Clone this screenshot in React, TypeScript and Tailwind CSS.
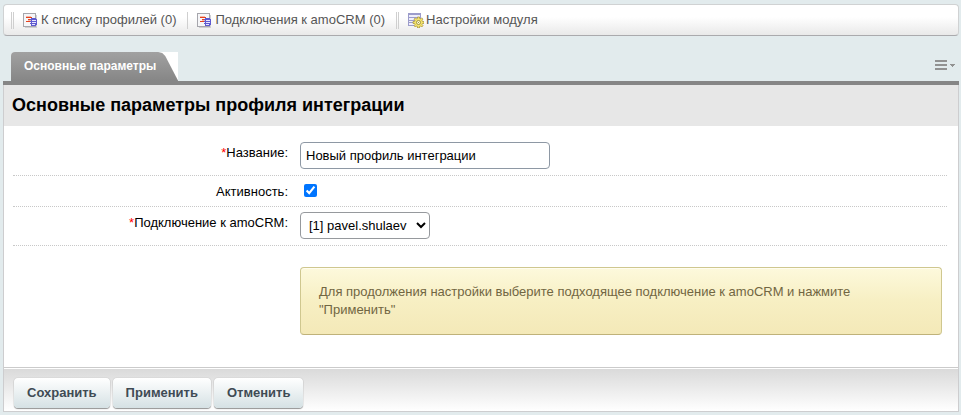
import { useState } from "react";
import type { ReactNode } from "react";

function ListIcon() {
  return (
    <svg width="16" height="16" viewBox="0 0 16 16" shapeRendering="crispEdges" className="shrink-0">
      <path d="M2 15h12v1H2zM13 3h1v13h-1z" fill="#cfcfd3" />
      <path d="M0 1h13v14H0z" fill="#a6a6ac" />
      <path d="M1 2h11v12H1z" fill="#f6f6f8" />
      <path d="M3 5h6v1H3zM5 7h4v1H5zM3 9h5v1H3z" fill="#e5421f" />
      <path d="M3 4h5v1H3zM5 8h3v1H5z" fill="#f6b9a8" />
      <path d="M8 6h5v1h1v6h-1v1H8v-2H7v-1h1v-1H7V9h1V8H7V7h1z" fill="#5f5ad0" />
      <path d="M9 8h4v1H9zM9 10h4v1H9zM9 12h3v1H9z" fill="#e6e6ff" />
    </svg>
  );
}

function SettingsIcon() {
  return (
    <svg width="16" height="16" viewBox="0 0 16 16" className="shrink-0">
      <g shapeRendering="crispEdges">
        <path d="M0 1h13v13H0z" fill="#9c9ccb" />
        <path d="M1 3h11v2H1zM1 6h11v2H1zM1 9h11v1H1zM1 11h11v2H1z" fill="#eeeefa" />
      </g>
      <path
        d="M9.500 5h2v1.400l1.200.5 1-1 1.300 1.300-1 1 .5 1.300H16v2h-1.500l-.5 1.200 1 1-1.300 1.300-1-1-1.200.5V16h-2v-1.500L8.300 14l-1 1L6 13.700l1-1-.5-1.200H5v-2h1.500L7 8.200l-1-1L7.300 5.900l1 1 1.200-.5z"
        fill="#f3e36a"
        stroke="#aa9740"
        strokeWidth=".8"
      />
      <circle cx="10.500" cy="10.500" r="2" fill="#fffbd0" stroke="#8f8234" strokeWidth=".8" />
      <circle cx="10.500" cy="10.500" r=".6" fill="#8f8234" />
    </svg>
  );
}

function ToolbarLink({ icon, children }: { icon: ReactNode; children: ReactNode }) {
  return (
    <a href="#" className="flex items-center gap-0.5 whitespace-nowrap text-[#555] hover:text-black">
      {icon}
      <span>{children}</span>
    </a>
  );
}

function Row({ id, label, required, children }: { id: string; label: string; required?: boolean; children: ReactNode }) {
  return (
    <div className="flex items-start gap-3 border-b border-dotted border-[#c8c8c8] pt-[5px] pb-1.5">
      <label htmlFor={id} className="w-[275px] shrink-0 pt-[3px] text-right leading-4">
        {required && <span className="text-[#f00]">*</span>}
        {label}:
      </label>
      {children}
    </div>
  );
}

function Button({ children }: { children: ReactNode }) {
  return (
    <button
      type="button"
      className="h-[30px] rounded bg-linear-to-b from-white to-[#d5e1e4] px-[13px] text-[13px] font-bold text-[#3f4b54] shadow-[0_0_1px_#0000004d,0_1px_1px_#00000066] hover:to-[#e5eef0]"
    >
      {children}
    </button>
  );
}

export default function App() {
  const [name, setName] = useState("Новый профиль интеграции");
  const [active, setActive] = useState(true);

  return (
    <div className="min-h-screen bg-[#e2ebed] pt-1 pr-0.5 pb-[3px] pl-[3px] font-['Liberation_Sans',Arial,sans-serif] text-[13px] text-black">
      <nav className="flex h-8 items-center rounded-sm border border-[#d0d2d3] border-b-[#aaaaad] bg-linear-to-b from-white from-40% to-[#e9e9e9] pl-[7px]">
        <span className="mr-[9px] h-[17px] w-[3px] border-x border-[#cfcfcf]" />
        <ToolbarLink icon={<ListIcon />}>К списку профилей (0)</ToolbarLink>
        <span className="mr-[9px] ml-[11px] h-[17px] w-px bg-[#cfcfcf]" />
        <ToolbarLink icon={<ListIcon />}>Подключения к amoCRM (0)</ToolbarLink>
        <span className="mr-[9px] ml-[11px] h-[17px] w-[3px] border-x border-[#cfcfcf]" />
        <ToolbarLink icon={<SettingsIcon />}>Настройки модуля</ToolbarLink>
      </nav>

      <div className="mt-4 flex items-start justify-between pr-1 pl-2">
        <div className="rounded-tl bg-white">
          <button
            type="button"
            className="block h-[29px] rounded-tl bg-linear-to-b from-[#a1a1a1] to-[#868686] pr-[22px] pb-0.5 pl-[13px] text-xs font-bold text-white [clip-path:polygon(0_0,calc(100%-20px)_0,calc(100%-16px)_1px,calc(100%-13px)_4px,100%_100%,0_100%)]"
          >
            Основные параметры
          </button>
        </div>
        <button type="button" aria-label="Меню" className="mt-2 flex">
          <svg width="20" height="10" viewBox="0 0 20 10" shapeRendering="crispEdges" fill="#929292">
            <path d="M0 0h12v2H0zM0 4h12v2H0zM0 8h12v2H0zM15 4h5v1h-1v1h-1v1h-1V6h-1V5h-1z" />
          </svg>
        </button>
      </div>

      <main className="border-t-4 border-[#868686]">
        <div className="border-x border-b border-[#cdcdcf] bg-white">
          <h1 className="bg-[#e7e7e7] px-2 pt-2 pb-[9px] text-lg/6 font-bold">Основные параметры профиля интеграции</h1>
          <form>
            <div className="pt-[11px] pr-[11px] pl-[9px]">
              <Row id="name" label="Название" required>
                <input
                  id="name"
                  type="text"
                  value={name}
                  onChange={(e) => setName(e.target.value)}
                  className="h-[27px] w-[250px] rounded border border-[#8e98a4] bg-white px-[5px]"
                />
              </Row>
              <Row id="active" label="Активность">
                <input
                  id="active"
                  type="checkbox"
                  checked={active}
                  onChange={(e) => setActive(e.target.checked)}
                  className="mt-[3px] ml-1 size-[13px]"
                />
              </Row>
              <Row id="connection" label="Подключение к amoCRM" required>
                <select id="connection" className="h-[27px] w-[130px] rounded border border-[#96999d] bg-white pl-1">
                  <option>[1] pavel.shulaev</option>
                </select>
              </Row>
            </div>

            <div className="pt-[21px] pr-4 pb-8 pl-[296px]">
              <p className="rounded border border-[#cfc78f] border-b-[#bfb27a] bg-linear-to-b from-[#fdf9dc] via-[#f7efc3] to-[#f4e9b8] px-[18px] pt-[15px] pb-[15px] leading-[18px] text-[#716642] shadow-[inset_0_1px_#fffdf0]">
                Для продолжения настройки выберите подходящее подключение к amoCRM и нажмите "Применить"
              </p>
            </div>

            <div className="flex gap-[3px] border-t border-[#cbcbcb] bg-linear-to-b from-[#d9d9d9] to-white px-2.5 pt-2.5 pb-[3px] shadow-[inset_0_1px_#fff]">
              <Button>Сохранить</Button>
              <Button>Применить</Button>
              <Button>Отменить</Button>
            </div>
          </form>
        </div>
      </main>
    </div>
  );
}
